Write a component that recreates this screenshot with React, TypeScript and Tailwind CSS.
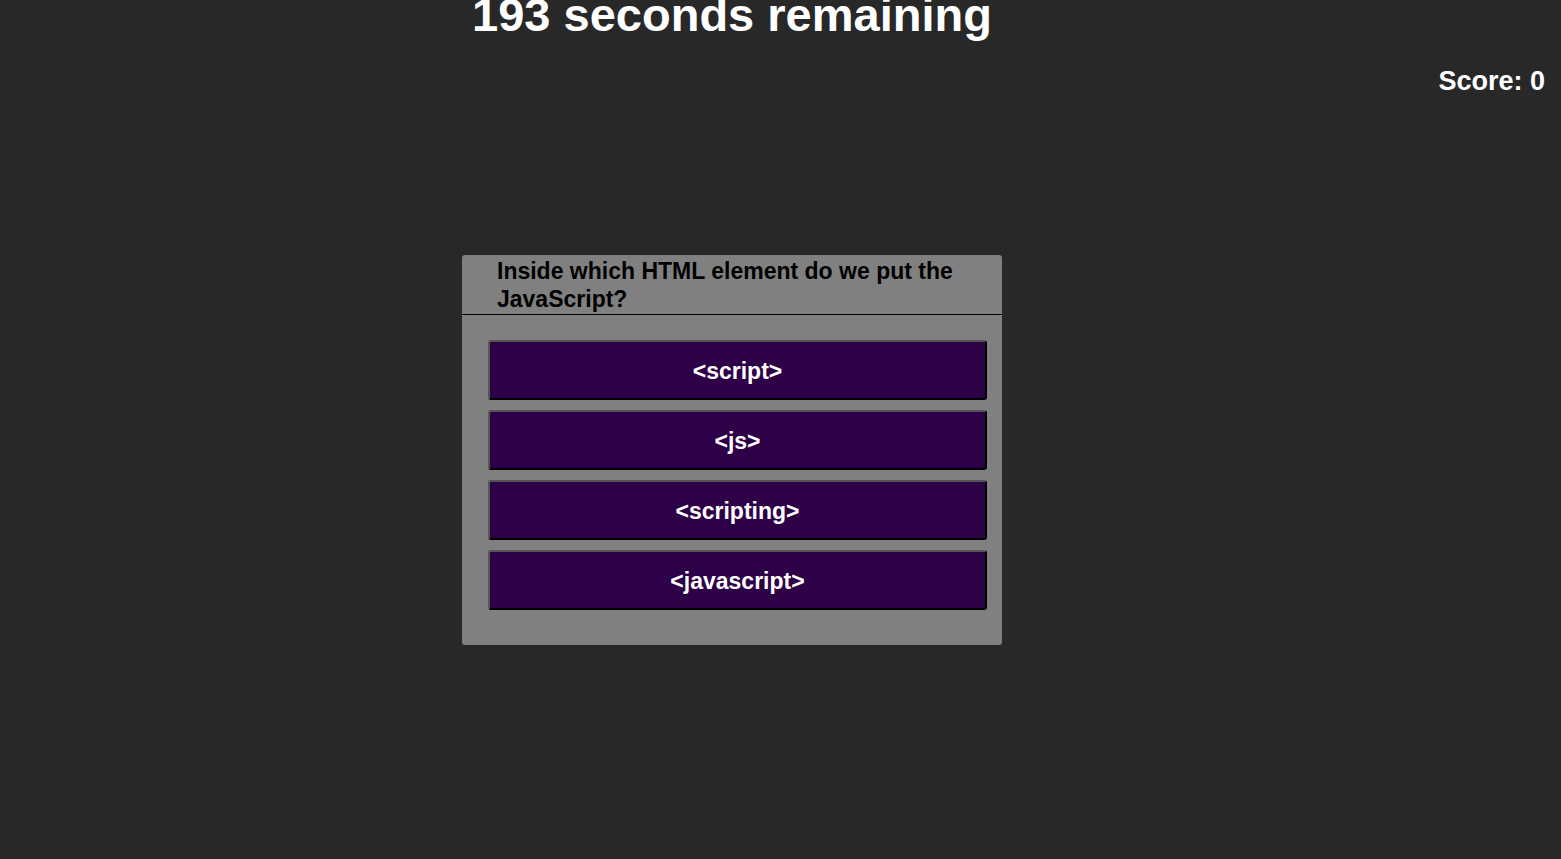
import React from 'react';

const answers = ['<script>', '<js>', '<scripting>', '<javascript>'];

export default function App() {
  return (
    <div className="relative min-h-[859px] w-full overflow-hidden bg-[#282828] font-['Liberation_Sans',Arial,sans-serif]">
      {/* Score */}
      <div className="absolute right-[16px] top-[68px] text-[27px] font-bold leading-none text-white">Score: 0</div>

      <div className="ml-[462px] flex w-[540px] flex-col items-center">
        <h1 className="-mt-[9px] whitespace-nowrap text-[47px] font-bold leading-[47px] text-white">193 seconds remaining</h1>

        {/* Question card */}
        <div className="mt-[217px] w-full rounded-[3px] bg-[#808080]">
          <div className="border-b border-black px-[35px] pb-[1px] pt-[2px] text-[23px] font-bold leading-[28px] text-black">
            Inside which HTML element do we put the JavaScript?
          </div>
          <div className="flex flex-col gap-[10px] pb-[35px] pl-[26px] pr-[15px] pt-[25px]">
            {answers.map(a => (
              <button
                key={a}
                className="h-[60px] w-full rounded-[3px] border-2 border-t-[#555] border-l-[#555] border-b-black border-r-black bg-[#2e0047] pt-[2px] text-[23px] font-bold text-white"
              >
                {a}
              </button>
            ))}
          </div>
        </div>
      </div>
    </div>
  );
}
